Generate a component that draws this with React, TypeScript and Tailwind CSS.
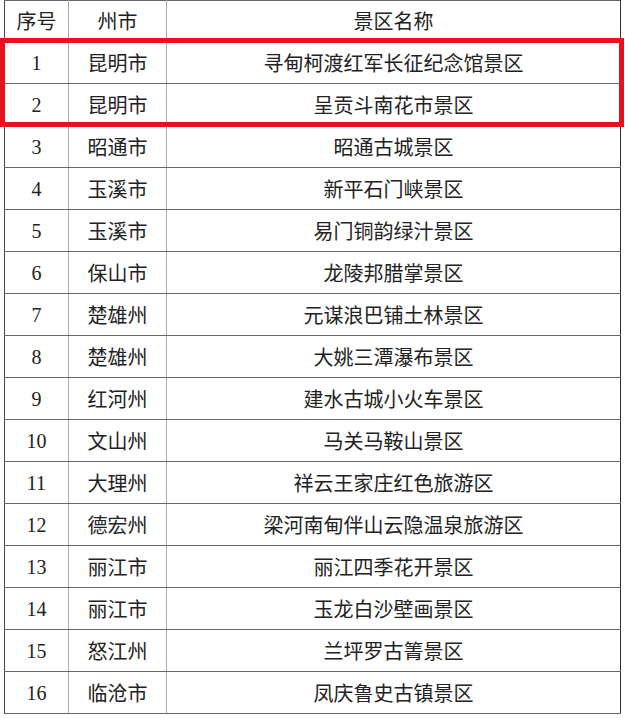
import React from "react";

const rows: [string, string, string][] = [
  ["1", "昆明市", "寻甸柯渡红军长征纪念馆景区"],
  ["2", "昆明市", "呈贡斗南花市景区"],
  ["3", "昭通市", "昭通古城景区"],
  ["4", "玉溪市", "新平石门峡景区"],
  ["5", "玉溪市", "易门铜韵绿汁景区"],
  ["6", "保山市", "龙陵邦腊掌景区"],
  ["7", "楚雄州", "元谋浪巴铺土林景区"],
  ["8", "楚雄州", "大姚三潭瀑布景区"],
  ["9", "红河州", "建水古城小火车景区"],
  ["10", "文山州", "马关马鞍山景区"],
  ["11", "大理州", "祥云王家庄红色旅游区"],
  ["12", "德宏州", "梁河南甸伴山云隐温泉旅游区"],
  ["13", "丽江市", "丽江四季花开景区"],
  ["14", "丽江市", "玉龙白沙壁画景区"],
  ["15", "怒江州", "兰坪罗古箐景区"],
  ["16", "临沧市", "凤庆鲁史古镇景区"],
];

const cjk = "font-['Noto_Sans_CJK_SC',sans-serif]";
const serif = "font-['Liberation_Serif','Noto_Sans_CJK_SC',serif]";

export default function App() {
  return (
    <div className="relative w-[625px] h-[718px] bg-white overflow-hidden">
      <div className="pl-[4px]">
        <table className="border-collapse table-fixed w-[617px] text-[#222] text-[20px]">
          <colgroup>
            <col className="w-[64px]" />
            <col className="w-[98px]" />
            <col />
          </colgroup>
          <thead>
            <tr className="h-[41px]">
              <th className={`${cjk} font-normal border-l border-l-[#444] border-r border-r-[#aaa] border-t border-t-[#666] border-b border-b-[#666] p-0 leading-none`}>序号</th>
              <th className={`${cjk} font-normal border-r border-r-[#aaa] border-t border-t-[#666] border-b border-b-[#666] p-0 leading-none`}>州市</th>
              <th className={`${cjk} font-normal border-r border-r-[#333] border-t border-t-[#666] border-b border-b-[#666] p-0 leading-none`}>景区名称</th>
            </tr>
          </thead>
          <tbody>
            {rows.map(([n, c, s]) => (
              <tr key={n} className="h-[42px]">
                <td className={`${serif} text-center border-l border-l-[#444] border-r border-r-[#aaa] border-b border-b-[#666] p-0 leading-none`}>{n}</td>
                <td className={`${cjk} text-center border-r border-r-[#aaa] border-b border-b-[#666] p-0 leading-none`}>{c}</td>
                <td className={`${cjk} text-center border-r border-r-[#333] border-b border-b-[#666] p-0 leading-none`}>{s}</td>
              </tr>
            ))}
          </tbody>
        </table>
      </div>
      <div className="absolute left-0 top-[38px] w-[624px] h-[89px] border-[5px] border-[#e3141c] pointer-events-none" />
    </div>
  );
}
